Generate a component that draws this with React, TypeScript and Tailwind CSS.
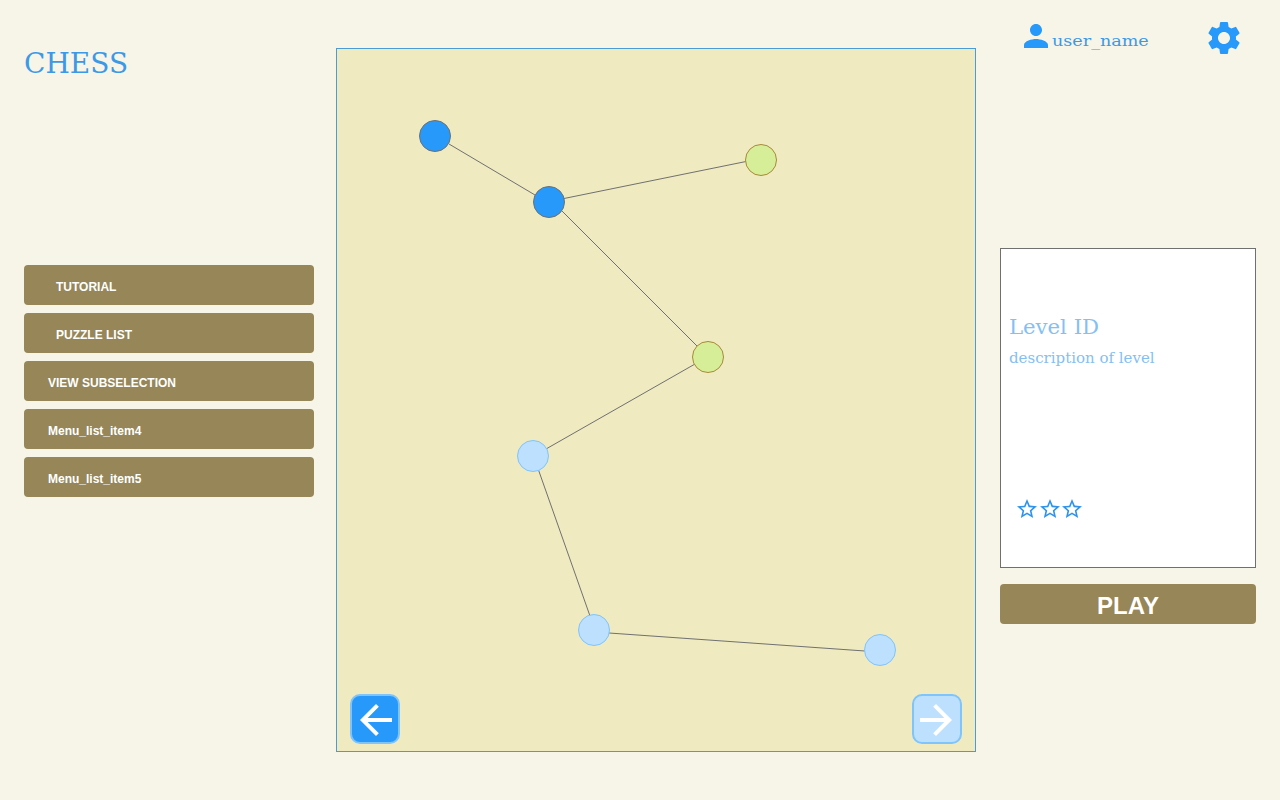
import type { ReactNode } from "react";
import { MdArrowBack, MdArrowForward, MdPerson, MdSettings, MdStarBorder } from "react-icons/md";

type NodeKind = "done" | "open" | "locked";

const nodes: { x: number; y: number; kind: NodeKind }[] = [
  { x: 98, y: 87, kind: "done" },
  { x: 212, y: 153, kind: "done" },
  { x: 424, y: 111, kind: "open" },
  { x: 371, y: 308, kind: "open" },
  { x: 196, y: 407, kind: "locked" },
  { x: 257, y: 581, kind: "locked" },
  { x: 543, y: 601, kind: "locked" },
];

const edges = [
  [112, 95, 198, 146],
  [227, 149.5, 409, 112.5],
  [225, 162, 360, 297],
  [358, 315, 209, 400],
  [201.5, 421, 253, 567],
  [272, 584, 528, 602],
];

const nodeStyle: Record<NodeKind, string> = {
  done: "fill-[#2699fb] stroke-[#707070]",
  open: "fill-[#d6ee98] stroke-[#a8893a]",
  locked: "fill-[#bce0fd] stroke-[#7fc4fd]",
};

const menu = [
  { label: "TUTORIAL", pad: "pl-8" },
  { label: "PUZZLE LIST", pad: "pl-8" },
  { label: "VIEW SUBSELECTION", pad: "pl-6" },
  { label: "Menu_list_item4", pad: "pl-6" },
  { label: "Menu_list_item5", pad: "pl-6" },
];

function ArrowButton({ tone, children }: { tone: string; children: ReactNode }) {
  return (
    <button
      className={`flex size-[50px] items-center justify-center rounded-[10px] border-2 border-[#7fc4fd] text-white ${tone}`}
    >
      {children}
    </button>
  );
}

export default function App() {
  return (
    <div className="flex h-[800px] w-[1280px] overflow-hidden bg-[#f7f5e7] pl-6 font-['DejaVu_Serif',serif]">
      <aside className="w-[290px] shrink-0 pt-[44px]">
        <h1 className="h-10 text-[28px] leading-10 text-[#3b99e8]">CHESS</h1>
        <nav className="mt-[181px] flex flex-col gap-2">
          {menu.map((item) => (
            <button
              key={item.label}
              className={`h-10 w-[289.5px] rounded-[4px] bg-[#968658] pt-[3px] text-left font-['Liberation_Sans',sans-serif] text-[12px] font-bold text-white ${item.pad}`}
            >
              {item.label}
            </button>
          ))}
        </nav>
      </aside>

      <main className="relative mt-12 ml-[22px] h-[704px] w-[640px] shrink-0 border border-[#4b9bd5] bg-[#efeac0]">
        <svg className="absolute inset-0" width="638" height="702" viewBox="0 0 638 702">
          {edges.map(([x1, y1, x2, y2]) => (
            <line key={`${x1}-${y1}`} x1={x1} y1={y1} x2={x2} y2={y2} className="stroke-[#707070]" />
          ))}
          {nodes.map((n) => (
            <circle key={`${n.x}-${n.y}`} cx={n.x} cy={n.y} r="15.5" className={nodeStyle[n.kind]} />
          ))}
        </svg>
        <div className="absolute inset-x-[13px] bottom-[7px] flex justify-between">
          <ArrowButton tone="bg-[#2699fb]">
            <MdArrowBack className="mt-0.5 ml-0.5 size-12 shrink-0" />
          </ArrowButton>
          <ArrowButton tone="bg-[#bce0fd]">
            <MdArrowForward className="mt-0.5 mr-0.5 size-12 shrink-0" />
          </ArrowButton>
        </div>
      </main>

      <aside className="ml-6 w-64 shrink-0 pt-[18px]">
        <header className="flex h-10 pl-[18px]">
          <MdPerson className="size-9 shrink-0 text-[#2699fb]" />
          <span className="-ml-[2px] origin-left scale-x-[1.12] pt-[9px] text-[15.7px] leading-[27px] text-[#3b99e8]">
            user_name
          </span>
          <MdSettings className="mr-3 ml-auto size-10 shrink-0 text-[#2699fb]" />
        </header>
        <section className="mt-[190px] flex h-80 flex-col border border-[#707070] bg-white px-2 pt-[63px] text-[#84c0f3]">
          <h2 className="text-[21.2px] leading-[30px]">Level ID</h2>
          <p className="mt-1 text-[15px] leading-6">description of level</p>
          <div className="mt-[127px] ml-[6px] flex text-[#2f93ec]">
            <MdStarBorder className="size-6" />
            <MdStarBorder className="-ml-px size-6" />
            <MdStarBorder className="-ml-0.5 size-6" />
          </div>
        </section>
        <button className="mt-4 h-10 w-full rounded-[4px] bg-[#968658] pt-1 font-['Liberation_Sans',sans-serif] text-[24px] leading-9 font-bold text-white">
          PLAY
        </button>
      </aside>
    </div>
  );
}
